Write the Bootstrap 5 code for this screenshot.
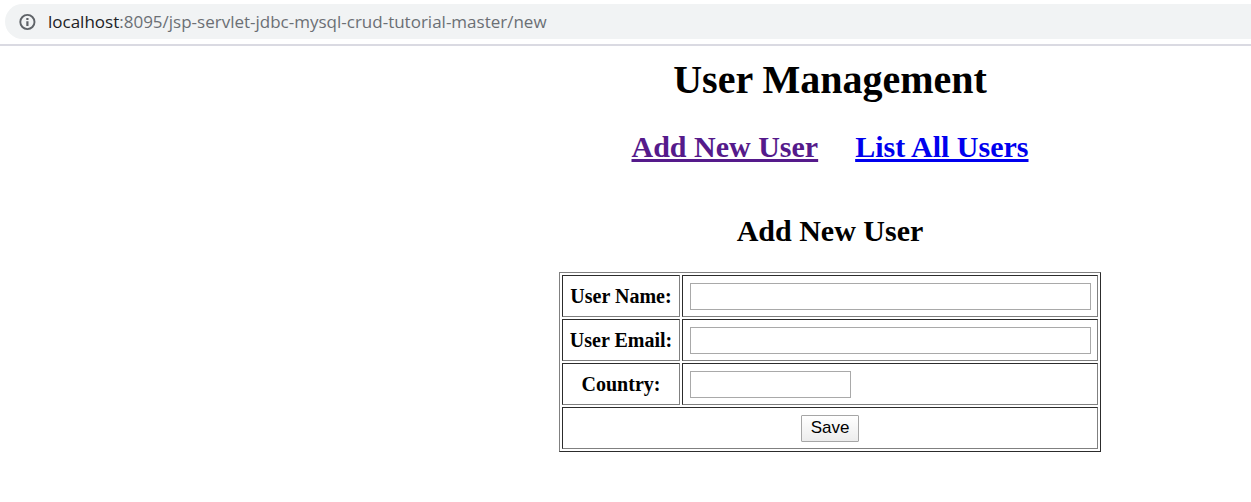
<!DOCTYPE html>
<html lang="en">
<head>
<meta charset="utf-8">
<meta name="viewport" content="width=device-width, initial-scale=1">
<title>User Management Application</title>
<link href="https://cdn.jsdelivr.net/npm/bootstrap@5.3.0/dist/css/bootstrap.min.css" rel="stylesheet">
<style>
  body { font-family: "Liberation Serif", "Times New Roman", serif; color: #000; background: #fff; }
  .browser-bar { padding: 4px 0 5px 5px; border-bottom: 2px solid #dadae2; }
  .address { height: 35px; padding-left: 13px; gap: 12px; background: #f1f3f4; border-radius: 18px 0 0 18px; font: 17px/35px "Open Sans", sans-serif; color: #6b6f74; }
  .address .host { color: #202124; }
  .page { padding: 11px 0 50px 409px; }
  .page h1 { font-size: 40px; line-height: 46px; font-weight: 700; margin: 0 0 27px; }
  .page h2 { font-size: 30px; line-height: 34px; font-weight: 700; margin: 0 0 50px; }
  .page nav { gap: 37px; }
  .page nav a { color: #00e; text-decoration-thickness: 3px; text-underline-offset: 2px; }
  .page nav a.visited { color: #551a8b; }
  .user-form { width: 542px; border: 1px solid; border-color: #808080 #2c2c2c #2c2c2c #808080; border-collapse: separate; border-spacing: 2px; }
  .user-form caption { caption-side: top; padding: 0 0 24px; color: #000; font-size: 30px; line-height: 34px; font-weight: 700; text-align: center; }
  .user-form th, .user-form td { height: 42px; padding: 7px 6px; border: 1px solid; border-color: #2c2c2c #808080 #808080 #2c2c2c; }
  .user-form td { padding-bottom: 6px; }
  .user-form td:not([colspan]) { padding-left: 7px; }
  .user-form th { width: 118px; font-size: 20px; line-height: 26px; text-align: center; white-space: nowrap; }
  .user-form input { display: block; height: 27px; padding: 1px 3px; border: 1px solid #a9a9a9; background: #fff; font: 17px "Liberation Sans", Arial, sans-serif; }
  .user-form .country { width: 161px; }
  .save { display: block; width: 58px; height: 27px; margin: 0 auto; padding: 0 0 2px; border: 1px solid #a6a6a6; border-radius: 1px; background: linear-gradient(#fff, #ececec); color: #000; font: 17px/23px "Liberation Sans", Arial, sans-serif; }
</style>
</head>
<body>
<header class="browser-bar">
  <div class="address d-flex align-items-center">
    <svg width="18" height="18" viewBox="0 0 18 18" aria-hidden="true">
      <circle cx="9.4" cy="9" r="7.1" fill="none" stroke="#5f6368" stroke-width="1.9"/>
      <path d="M8.3 5h2.2v2H8.3zM8.3 8.2h2.2V13H8.3z" fill="#5f6368"/>
    </svg>
    <div class="text-nowrap"><span class="host">localhost</span>:8095/jsp-servlet-jdbc-mysql-crud-tutorial-master/new</div>
  </div>
</header>
<main class="page text-center">
  <h1>User Management</h1>
  <h2><nav class="d-flex justify-content-center"><a class="visited" href="#new">Add New User</a><a href="#list">List All Users</a></nav></h2>
  <form id="new" onsubmit="return false">
    <table class="user-form mx-auto">
      <caption>Add New User</caption>
      <tbody>
        <tr><th scope="row"><label for="name">User Name:</label></th><td><input class="w-100" type="text" id="name" name="name"></td></tr>
        <tr><th scope="row"><label for="email">User Email:</label></th><td><input class="w-100" type="text" id="email" name="email"></td></tr>
        <tr><th scope="row"><label for="country">Country:</label></th><td><input class="country" type="text" id="country" name="country"></td></tr>
        <tr><td colspan="2"><button class="save" type="submit">Save</button></td></tr>
      </tbody>
    </table>
  </form>
</main>
<script src="https://cdn.jsdelivr.net/npm/bootstrap@5.3.0/dist/js/bootstrap.bundle.min.js"></script>
</body>
</html>
